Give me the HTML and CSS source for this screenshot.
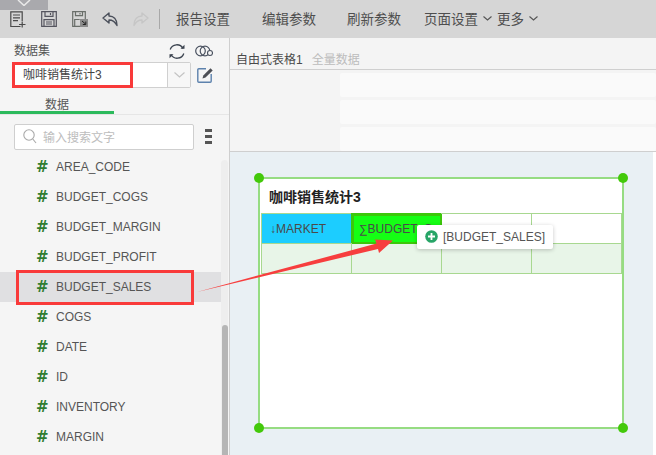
FILE: index.html
```html
<!DOCTYPE html>
<html lang="zh">
<head>
<meta charset="utf-8">
<title>咖啡销售统计3</title>
<link rel="stylesheet" href="styles.css">
</head>
<body>
<div class="app">
  <header class="topbar">
    <div class="corner"><svg width="14" height="6" viewBox="0 0 14 6"><path d="M1 0l6 5.500L13 0" fill="none" stroke="#e9e9e9" stroke-width="1.500"/></svg></div>
    <div class="tools">
      <svg class="tool" width="16" height="17" viewBox="0 0 16 17"><path d="M10.500 15.500H.8V.8h11.400V10M3 4h7M3 6.800h7M3 9.600h5M9 13.500h6.500M12.200 10.500v6" fill="none" stroke="#4a4a4a" stroke-width="1.200"/></svg>
      <svg class="tool" width="16" height="16" viewBox="0 0 16 16"><path d="M.7.7h14.600v14.600H.7zM4 .7v4.600h8V.7M9.500 2v2M3 15.300V8.600h10v6.700M5 11h6M5 13h6" fill="none" stroke="#55555f" stroke-width="1.200"/></svg>
      <svg class="tool" width="16" height="16" viewBox="0 0 16 16"><path d="M8 15.300H.7V.7h12.600V8M3.500.7v4h7v-4M8 2v1.500M2.700 15V8.500h5" fill="none" stroke="#6a6f6a" stroke-width="1.200"/><rect x="8" y="8" width="8" height="8" fill="#8b8b8b"/><path d="M10 10l3.500 3M13.800 10.500v3h-3" fill="none" stroke="#222" stroke-width="1"/></svg>
      <svg class="tool" width="16" height="15" viewBox="0 0 16 15"><path d="M7 1L1 6l6 5V8c3.500 0 6 1.500 8 5.500C15 7 11.500 4 7 4z" fill="none" stroke="#4a4f5a" stroke-width="1.400" stroke-linejoin="round"/></svg>
      <svg class="tool" width="16" height="15" viewBox="0 0 16 15"><path d="M9 1l6 5-6 5V8c-3.500 0-6 1.500-8 5.500C1 7 4.500 4 9 4z" fill="none" stroke="#c6c6c6" stroke-width="1.400" stroke-linejoin="round"/></svg>
      <span class="divider"></span>
    </div>
    <nav class="menu">
      <span class="menu-item m1">报告设置</span>
      <span class="menu-item m2">编辑参数</span>
      <span class="menu-item m3">刷新参数</span>
      <span class="menu-item m4">页面设置<svg class="caret" width="9" height="5" viewBox="0 0 9 5"><path d="M.5.500l4 3.500 4-3.500" fill="none" stroke="#555" stroke-width="1.100"/></svg></span>
      <span class="menu-item m5">更多<svg class="caret" width="9" height="5" viewBox="0 0 9 5"><path d="M.5.500l4 3.500 4-3.500" fill="none" stroke="#555" stroke-width="1.100"/></svg></span>
    </nav>
  </header>

  <div class="main">
    <aside class="sidebar">
      <div class="ds-head">
        <span class="ds-title">数据集</span>
        <svg class="ds-refresh" width="18" height="17" viewBox="0 0 18 17"><path d="M2.200 6.500A7 7 0 0 1 15 5.500M15.800 10.500A7 7 0 0 1 3 11.500" fill="none" stroke="#3c4450" stroke-width="1.300"/><path d="M12.500 5.800h4V1.800zM5.500 11.200h-4v4z" fill="#3c4450"/></svg>
        <svg class="ds-link" width="18" height="12" viewBox="0 0 18 12"><circle cx="5.500" cy="6" r="4.800" fill="none" stroke="#4a5260" stroke-width="1.200"/><circle cx="10" cy="6" r="4.800" fill="none" stroke="#4a5260" stroke-width="1.200"/><circle cx="15" cy="8" r="2.500" fill="#f5f5f5" stroke="#4a5260" stroke-width="1.100"/></svg>
      </div>
      <div class="ds-row">
        <div class="select">
          <span class="select-value">咖啡销售统计3</span>
          <span class="select-arrow"><svg width="11" height="6" viewBox="0 0 11 6"><path d="M.5.500l5 4.500 5-4.500" fill="none" stroke="#c4c4c4" stroke-width="1.200"/></svg></span>
        </div>
        <svg class="edit" width="17" height="16" viewBox="0 0 17 16"><path d="M9 1.800H1.800a1 1 0 0 0-1 1v11.500a1 1 0 0 0 1 1h11.400a1 1 0 0 0 1-1V7" fill="none" stroke="#5d82ad" stroke-width="1.400"/><path d="M5.500 11.500l.8-3L13.500 1.200l2.200 2.200-7.200 7.200z" fill="#4d4f55"/></svg>
      </div>
      <div class="tabs"><span class="tab">数据</span></div>
      <div class="search-row">
        <div class="search">
          <svg width="14" height="15" viewBox="0 0 14 15"><circle cx="6" cy="6" r="5.200" fill="none" stroke="#a9a9a9" stroke-width="1.100"/><path d="M9.800 10l3.200 4" stroke="#a9a9a9" stroke-width="1.100"/></svg>
          <span class="placeholder">输入搜索文字</span>
        </div>
        <div class="list-menu"><i></i><i></i><i></i></div>
      </div>
      <div class="list-wrap">
        <ul class="fields">
          <li class="field"><b>#</b><span>AREA_CODE</span></li>
          <li class="field"><b>#</b><span>BUDGET_COGS</span></li>
          <li class="field"><b>#</b><span>BUDGET_MARGIN</span></li>
          <li class="field"><b>#</b><span>BUDGET_PROFIT</span></li>
          <li class="field selected"><b>#</b><span>BUDGET_SALES</span></li>
          <li class="field"><b>#</b><span>COGS</span></li>
          <li class="field"><b>#</b><span>DATE</span></li>
          <li class="field"><b>#</b><span>ID</span></li>
          <li class="field"><b>#</b><span>INVENTORY</span></li>
          <li class="field"><b>#</b><span>MARGIN</span></li>
        </ul>
        <div class="scrollbar"><div class="thumb"></div></div>
      </div>
    </aside>

    <section class="work">
      <div class="panel">
        <div class="panel-tabs"><span class="panel-active">自由式表格1</span><span class="panel-muted">全量数据</span></div>
        <div class="slots"><div class="slot"></div><div class="slot"></div><div class="slot"></div></div>
      </div>
      <div class="canvas">
        <div class="report">
          <i class="dot tl"></i><i class="dot tr"></i><i class="dot bl"></i><i class="dot br"></i>
          <h1 class="report-title">咖啡销售统计3</h1>
          <div class="grid">
            <div class="cell market">↓MARKET</div>
            <div class="cell budget">∑BUDGET_S</div>
            <div class="cell"></div>
            <div class="cell"></div>
            <div class="cell alt"></div>
            <div class="cell alt"></div>
            <div class="cell alt"></div>
            <div class="cell alt"></div>
          </div>
        </div>
      </div>
    </section>
  </div>

  <div class="mark mark-select"></div>
  <div class="mark mark-field"></div>
  <svg class="arrow" width="200" height="56" viewBox="0 0 200 56"><polygon points="1,54 180.500,5.500 179,1.500 197,2.500 183,15 182,11" fill="#f73e3e"/></svg>
  <div class="drag-tip">
    <svg width="13" height="13" viewBox="0 0 13 13"><circle cx="6.500" cy="6.500" r="6.300" fill="#27a567"/><path d="M3 6.500h7M6.500 3v7" stroke="#fff" stroke-width="1.800"/></svg>
    <span>[BUDGET_SALES]</span>
  </div>
</div>
</body>
</html>
```
FILE: styles.css
```css
* { box-sizing: border-box; }
html, body { margin: 0; padding: 0; }
body {
  width: 656px;
  height: 455px;
  overflow: hidden;
  background: #fff;
  color: #555;
  font-family: "Liberation Sans", "Noto Sans CJK SC", sans-serif;
  font-size: 12px;
}
.app { position: relative; width: 656px; height: 455px; overflow: hidden; display: flex; flex-direction: column; }

/* top bar */
.topbar { position: relative; flex: 0 0 38px; height: 38px; background: #d6d6d6; display: flex; align-items: center; }
.corner { position: absolute; left: 0; top: 0; width: 48px; height: 10px; background: #a9a9ad; display: flex; justify-content: center; align-items: flex-start; }
.tools { display: flex; align-items: center; padding-left: 10px; padding-top: 0; }
.tool { display: block; margin-right: 14.800px; }
.divider { width: 1px; height: 20px; background: #a8a8a8; margin-left: -5px; }
.menu { display: flex; align-items: center; font-size: 13.500px; color: #4e4e4e; font-family: "Noto Sans CJK SC", sans-serif; padding-bottom: 3px; }
.menu-item { display: flex; align-items: center; white-space: nowrap; line-height: 20px; }
.m1 { margin-left: 16px; }
.m2 { margin-left: 32px; }
.m3 { margin-left: 31px; }
.m4 { margin-left: 23px; }
.m5 { margin-left: 5px; }
.caret { margin-left: 5px; margin-top: 1px; }

.main { flex: 1; display: flex; min-height: 0; }

/* sidebar */
.sidebar { flex: 0 0 230px; width: 230px; background: #f5f5f5; border-right: 1px solid #cfcfcf; display: flex; flex-direction: column; min-height: 0; }
.ds-head { height: 24px; display: flex; align-items: center; padding-left: 14px; font-family: "Noto Sans CJK SC", sans-serif; }
.ds-title { font-size: 12px; color: #555; line-height: 20px; flex: 0 0 154px; }
.ds-refresh { margin-top: 2px; }
.ds-link { margin-left: 9px; margin-top: 1px; }
.ds-row { height: 26px; display: flex; align-items: center; padding-left: 12px; }
.select { width: 179px; height: 26px; background: #fff; border: 1px solid #d0d0d0; border-radius: 2px; display: flex; align-items: stretch; }
.select-value { flex: 1; padding-left: 10px; line-height: 24px; color: #444; font-size: 12px; font-family: "Liberation Sans", "Noto Sans CJK SC", sans-serif; }
.select-arrow { width: 23px; border-left: 1px solid #d0d0d0; display: flex; align-items: center; justify-content: center; background: #f7f7f7; }
.edit { margin-left: 6px; margin-top: -1px; }
.tabs { height: 27px; border-bottom: 1px solid #e6e6e6; }
.tab { display: block; width: 114px; height: 26px; padding-left: 45px; padding-top: 8px; line-height: 16px; font-size: 12px; color: #555; border-bottom: 3px solid #2cba5c; font-family: "Noto Sans CJK SC", sans-serif; }
.search-row { display: flex; align-items: center; padding: 8px 0 0 14px; height: 35px; }
.search { width: 180px; height: 26px; background: #fff; border: 1px solid #cfcfcf; border-radius: 2px; display: flex; align-items: center; padding-left: 8px; }
.placeholder { margin-left: 6px; color: #bdbdbd; font-size: 12px; font-family: "Noto Sans CJK SC", sans-serif; }
.list-menu { margin-left: 11px; width: 7px; display: flex; flex-direction: column; gap: 3px; }
.list-menu i { display: block; height: 3px; background: #555; }
.list-wrap { flex: 1; position: relative; display: flex; min-height: 0; overflow: hidden; padding-top: 2px; }
.fields { list-style: none; margin: 0; padding: 0; flex: 0 0 221px; width: 221px; }
.field { height: 30px; display: flex; align-items: center; padding-left: 36px; color: #555; font-size: 12px; }
.field b { width: 20px; font-size: 15px; color: #2f7d32; font-weight: 700; font-family: "DejaVu Sans", sans-serif; }
.field.selected { background: #e0e0e2; }
.scrollbar { position: absolute; left: 221px; top: 10px; width: 7px; bottom: 0; background: #eeeeee; border-radius: 4px 4px 0 0; }
.thumb { position: absolute; left: 1px; top: 165px; width: 6px; height: 140px; background: #b5b5b5; border-radius: 3px; }

/* workspace */
.work { flex: 1; display: flex; flex-direction: column; min-width: 0; }
.panel { flex: 0 0 114px; height: 114px; background: #f4f4f4; border-bottom: 1px solid #cfcfcf; }
.panel-tabs { height: 32px; padding: 10px 0 0 6px; border-bottom: 1px solid #cfcfcf; display: flex; align-items: center; font-size: 12px; font-family: "Liberation Sans", "Noto Sans CJK SC", sans-serif; }
.panel-active { color: #4a4a4a; }
.panel-muted { color: #bcbcbc; margin-left: 9px; }
.slots { display: flex; flex-direction: column; gap: 3px; padding: 3px 0 0 110px; }
.slot { height: 24px; background: #fafafa; border-radius: 2px; }
.canvas { flex: 1; margin-right: 3px; background: #e9f0f4; padding: 25px 30px 0 28px; }

.report { position: relative; width: 366px; height: 252px; background: #fff; border: 2px solid #96dc82; padding-top: 3px; }
.dot { position: absolute; width: 10px; height: 10px; border-radius: 50%; background: #43c90a; }
.tl { left: -6px; top: -6px; }
.tr { right: -6px; top: -6px; }
.bl { left: -6px; bottom: -6px; }
.br { right: -6px; bottom: -6px; }
.report-title { margin: 0; padding-left: 9px; font-size: 14px; line-height: 30px; height: 31px; font-weight: 700; color: #222; font-family: "Liberation Sans", "Noto Sans CJK SC", sans-serif; }
.grid { display: grid; grid-template-columns: 90px 90px 90px 90px; grid-template-rows: 30px 30px; margin-left: 1px; width: 361px; border-left: 1px solid #a8d890; border-top: 1px solid #a8d890; }
.cell { border-right: 1px solid #a8d890; border-bottom: 1px solid #a8d890; padding-left: 8px; line-height: 30px; font-size: 12px; color: #4a4a4a; overflow: hidden; white-space: nowrap; font-family: "Liberation Sans", "DejaVu Sans", sans-serif; }
.market { background: #1ccdff; }
.budget { background: #15ff15; outline: 2px solid #3cc70a; outline-offset: -2px; box-shadow: -1px -1px 0 #3cc70a; padding-left: 7px; }
.alt { background: #e8f5e8; }

/* overlays */
.mark { position: absolute; border: 3px solid #f93a3a; }
.mark-select { left: 12px; top: 62px; width: 121px; height: 26px; }
.mark-field { left: 16px; top: 270px; width: 178px; height: 35px; }
.arrow { position: absolute; left: 196px; top: 238px; }
.drag-tip { position: absolute; left: 417px; top: 225px; width: 136px; height: 24px; background: #fff; border-radius: 2px; box-shadow: 0 1px 4px rgba(0,0,0,.22); display: flex; align-items: center; padding-left: 8px; gap: 5px; color: #555; font-size: 12px; }
.drag-tip svg { margin-top: -2px; }
```
